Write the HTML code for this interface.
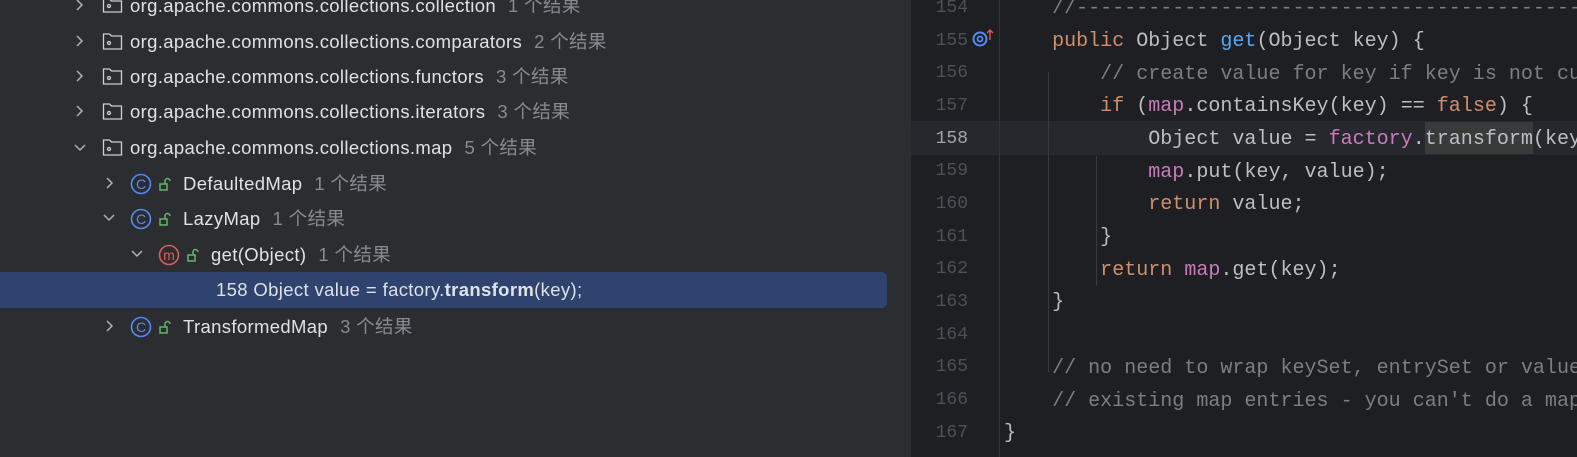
<!DOCTYPE html>
<html><head><meta charset="utf-8"><style>
*{margin:0;padding:0;box-sizing:border-box}
html,body{overflow:hidden}
body{width:1577px;height:457px;background:#1e1f22;position:relative;font-family:"Liberation Sans","Noto Sans CJK SC",sans-serif}
#left{position:absolute;left:0;top:0;width:911px;height:457px;background:#2b2d30}
.row{position:absolute;left:0;height:36px;line-height:36px;font-size:18.5px;letter-spacing:0.35px;color:#dfe1e5;white-space:nowrap}
.row .c{color:#868a91;margin-left:12px}
.sel{position:absolute;left:0;top:272px;width:887px;height:36px;background:#2e436e;border-radius:0 5px 5px 0}
.abs{position:absolute}
#ed{position:absolute;left:911px;top:0;width:666px;height:457px;overflow:hidden}
.ln{position:absolute;left:0;width:57px;text-align:right;font-family:"Liberation Mono",monospace;font-size:18px;color:#4b5059}
.code{position:absolute;left:93px;font-family:"Liberation Mono",monospace;font-size:20.05px;color:#bcbec4;white-space:pre}
.k{color:#cf8e6d}.f{color:#c77dbb}.m{color:#56a8f5}.cm{color:#7a7e85}
</style></head><body>
<div id="left">
<div class="sel"></div>
</div>
<svg class="abs" style="left:0;top:0" width="911" height="457">
<g fill="none" stroke="#aeb2b8" stroke-width="1.5">
<path d="M77 0l5 5-5 5"/>
<path d="M77 36l5 5-5 5"/>
<path d="M77 71l5 5-5 5"/>
<path d="M77 106l5 5-5 5"/>
<path d="M75 145l5 5 5-5"/>
<path d="M107 178l5 5-5 5"/>
<path d="M104 215l5 5 5-5"/>
<path d="M132 251l5 5 5-5"/>
<path d="M107 321l5 5-5 5"/>
</g>
<g fill="none" stroke="#ced0d6" stroke-width="1.3">
<path d="M103.5 -1h6l2 2h10v11h-18z"/><circle cx="109" cy="6" r="1.5"/>
<path d="M103.5 34h6l2 2h10v13h-18z"/><circle cx="109" cy="43" r="1.5"/>
<path d="M103.5 69h6l2 2h10v13h-18z"/><circle cx="109" cy="78" r="1.5"/>
<path d="M103.5 104h6l2 2h10v13h-18z"/><circle cx="109" cy="113" r="1.5"/>
<path d="M103.5 140h6l2 2h10v13h-18z"/><circle cx="109" cy="149" r="1.5"/>
</g>
<g fill="none" stroke="#548af7" stroke-width="1.6">
<circle cx="141" cy="184" r="9.5"/><circle cx="141" cy="219" r="9.5"/><circle cx="141" cy="327" r="9.5"/>
</g>
<g fill="#548af7" font-size="14" font-family="Liberation Sans" text-anchor="middle">
<text x="141" y="189">C</text><text x="141" y="224">C</text><text x="141" y="332">C</text>
</g>
<circle cx="169" cy="255" r="9.5" fill="none" stroke="#db5c5c" stroke-width="1.6"/>
<text x="169" y="260" fill="#db5c5c" font-size="14" font-family="Liberation Sans" text-anchor="middle">m</text>
<g fill="none" stroke="#5fb865" stroke-width="1.5">
<path d="M160 184h7v6h-7z M165 184v-3a2.5 2.5 0 0 1 5 0"/>
<path d="M160 219h7v6h-7z M165 219v-3a2.5 2.5 0 0 1 5 0"/>
<path d="M188 255h7v6h-7z M193 255v-3a2.5 2.5 0 0 1 5 0"/>
<path d="M160 327h7v6h-7z M165 327v-3a2.5 2.5 0 0 1 5 0"/>
</g>
</svg>
<div class="row" style="left:130px;top:-12px">org.apache.commons.collections.collection<span class="c">1 个结果</span></div>
<div class="row" style="left:130px;top:24px">org.apache.commons.collections.comparators<span class="c">2 个结果</span></div>
<div class="row" style="left:130px;top:59px">org.apache.commons.collections.functors<span class="c">3 个结果</span></div>
<div class="row" style="left:130px;top:94px">org.apache.commons.collections.iterators<span class="c">3 个结果</span></div>
<div class="row" style="left:130px;top:130px">org.apache.commons.collections.map<span class="c">5 个结果</span></div>
<div class="row" style="left:183px;top:166px">DefaultedMap<span class="c">1 个结果</span></div>
<div class="row" style="left:183px;top:201px">LazyMap<span class="c">1 个结果</span></div>
<div class="row" style="left:211px;top:237px">get(Object)<span class="c">1 个结果</span></div>
<div class="row" style="left:216px;top:272px">158 Object value = factory.<b>transform</b>(key);</div>
<div class="row" style="left:183px;top:309px">TransformedMap<span class="c">3 个结果</span></div>

<div id="ed">
<div class="abs" style="left:0;top:121px;width:666px;height:34px;background:#26282e"></div>
<div class="abs" style="left:88px;top:0;width:1px;height:457px;background:#313438"></div>
<div class="abs" style="left:137px;top:72px;width:1px;height:300px;background:#393b40"></div>
<div class="abs" style="left:185px;top:156px;width:1px;height:130px;background:#393b40"></div>
<div class="abs" style="left:514px;top:122px;width:108px;height:32px;background:#373b39"></div>
<svg class="abs" style="left:59px;top:28px" width="24" height="22"><circle cx="10" cy="11" r="6.5" fill="none" stroke="#548af7" stroke-width="2"/><circle cx="10" cy="11" r="2.5" fill="none" stroke="#548af7" stroke-width="1.8"/><path d="M20 12V2M17 5l3-3 3 3" fill="none" stroke="#e05555" stroke-width="1.4"/></svg>

<div class="ln" style="top:-2px">154</div>
<div class="ln" style="top:31px">155</div>
<div class="ln" style="top:63px">156</div>
<div class="ln" style="top:96px">157</div>
<div class="ln" style="top:129px;color:#a1a3ab">158</div>
<div class="ln" style="top:161px">159</div>
<div class="ln" style="top:194px">160</div>
<div class="ln" style="top:227px">161</div>
<div class="ln" style="top:259px">162</div>
<div class="ln" style="top:292px">163</div>
<div class="ln" style="top:325px">164</div>
<div class="ln" style="top:357px">165</div>
<div class="ln" style="top:390px">166</div>
<div class="ln" style="top:423px">167</div>

<div class="code" style="top:-3px"><span class="cm">    //-----------------------------------------------</span></div>
<div class="code" style="top:30px">    <span class="k">public</span> Object <span class="m">get</span>(Object key) {</div>
<div class="code" style="top:63px"><span class="cm">        // create value for key if key is not currently in the map</span></div>
<div class="code" style="top:95px">        <span class="k">if</span> (<span class="f">map</span>.containsKey(key) == <span class="k">false</span>) {</div>
<div class="code" style="top:128px">            Object value = <span class="f">factory</span>.transform(key);</div>
<div class="code" style="top:161px">            <span class="f">map</span>.put(key, value);</div>
<div class="code" style="top:193px">            <span class="k">return</span> value;</div>
<div class="code" style="top:226px">        }</div>
<div class="code" style="top:259px">        <span class="k">return</span> <span class="f">map</span>.get(key);</div>
<div class="code" style="top:291px">    }</div>
<div class="code" style="top:357px"><span class="cm">    // no need to wrap keySet, entrySet or values as they are views of</span></div>
<div class="code" style="top:390px"><span class="cm">    // existing map entries - you can't do a map-style get on them.</span></div>
<div class="code" style="top:422px">}</div>
</div>
</body></html>
